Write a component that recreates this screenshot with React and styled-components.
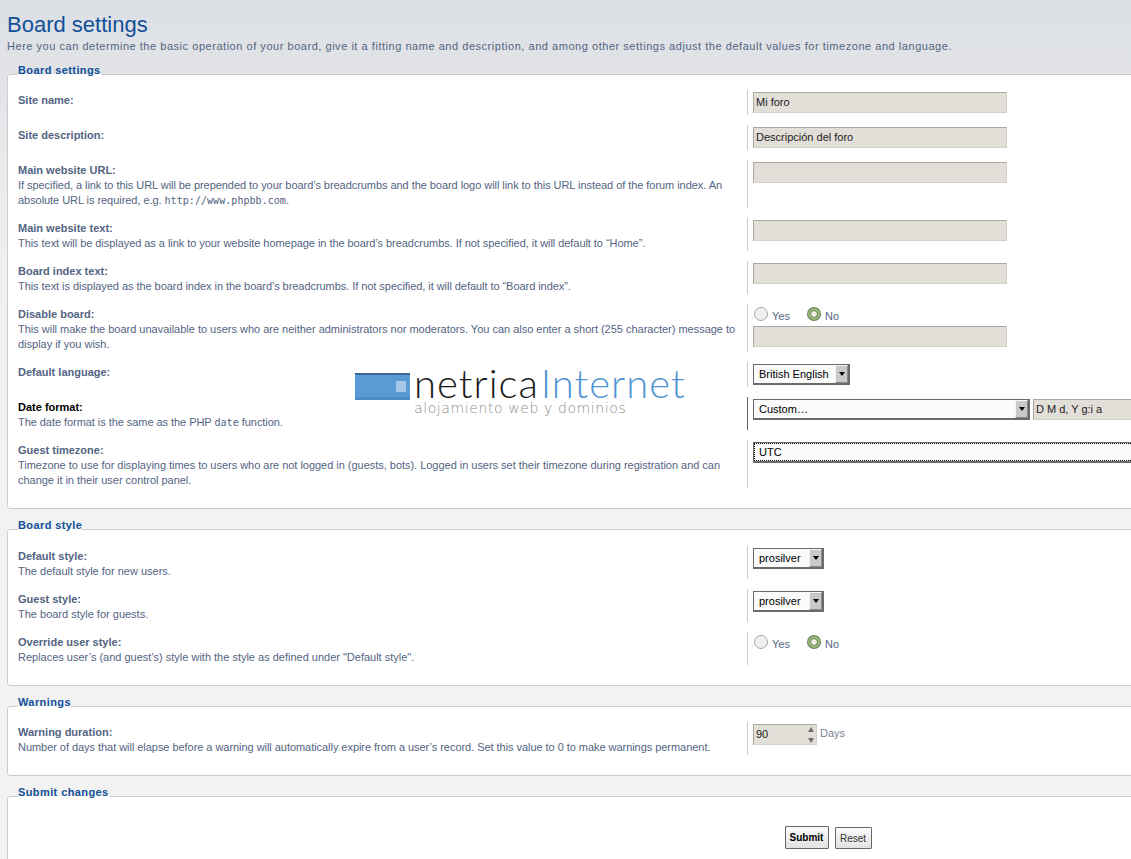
import React from 'react';
import styled, { createGlobalStyle } from 'styled-components';

const GlobalStyle = createGlobalStyle`
  html, body {
    margin: 0;
    padding: 0;
    height: 859px;
    overflow: hidden;
    background: #f3f3f3;
  }
  body {
    font-family: "Liberation Sans", Arial, sans-serif;
    font-size: 11px;
    color: #536482;
  }
`;

const Page = styled.div`
  position: relative;
  width: 1131px;
  height: 859px;
  overflow: hidden;
  padding: 12px 0 0 7px;
  box-sizing: border-box;
  background: linear-gradient(#dcdfe4 0, #e1e3e7 75px, #eeeeee 220px, #f2f2f2 480px);
`;

const Title = styled.h1`
  margin: 0;
  font-size: 22px;
  line-height: 26px;
  font-weight: normal;
  color: #115098;
`;

const Intro = styled.p`
  margin: 1px 0 0;
  font-size: 11px;
  line-height: 14px;
  letter-spacing: 0.536px;
  white-space: nowrap;
  color: #536482;
`;

const Panel = styled.fieldset`
  width: 1642px;
  margin: ${p => p.$top}px 0 0;
  padding: ${p => p.$pad}px 0 ${p => p.$bottom}px 10px;
  box-sizing: border-box;
  background: #fff;
  border: 1px solid #ccc;
  border-radius: 3px;
  min-width: 0;
`;

const Legend = styled.legend`
  margin: 0;
  padding: 0 0 8px;
  font-size: 11px;
  line-height: 12px;
  font-weight: bold;
  letter-spacing: 0.4px;
  color: #115098;
`;

const Rows = styled.div`
  display: flex;
  flex-direction: column;
  gap: 10px;
`;

const Row = styled.div`
  display: flex;
  min-height: 25px;
`;

const Info = styled.div`
  width: 720px;
  margin-right: 9px;
  padding-top: 3px;
  line-height: 15px;
  letter-spacing: ${p => p.$track ?? -0.053}px;
`;

const Label = styled.div`
  font-weight: bold;
  letter-spacing: 0;
  color: ${p => (p.$active ? '#000' : '#536482')};
`;

const Code = styled.code`
  font-family: "DejaVu Sans Mono", monospace;
  font-size: 10px;
  letter-spacing: 0.05px;
`;

const Field = styled.div`
  flex: 1;
  border-left: 1px solid ${p => (p.$active ? '#666' : '#ccc')};
  padding: 2px 0 0 5px;
`;

const TextInput = styled.input`
  display: block;
  width: ${p => p.$width || 254}px;
  height: 21px;
  padding: 0 2px 2px;
  box-sizing: border-box;
  font: 11px "Liberation Sans", Arial, sans-serif;
  color: #222;
  background: #e2ded8;
  border: 1px solid #d4d0c8;
  border-top-color: #aaa79f;
  border-left-color: #aaa79f;
  outline: none;
`;

const Inline = styled.div`
  display: flex;
  align-items: center;
  gap: ${p => p.$gap}px;
`;

const Select = styled.div`
  display: flex;
  align-items: center;
  justify-content: space-between;
  width: ${p => p.$width}px;
  height: 21px;
  box-sizing: border-box;
  border: 1px solid #6b6b6b;
  border-width: 1px 2px 2px 1px;
  background: #fafafa;
  color: #000;
  padding-left: 5px;
  flex-shrink: 0;
  position: relative;
`;

const FocusText = styled.span`
  position: absolute;
  inset: 0;
  padding: 2px 5px;
  outline: 1px dotted #000;
  outline-offset: -1px;
  line-height: 15px;
`;

const Arrow = styled.span`
  display: flex;
  align-items: center;
  justify-content: center;
  width: 13px;
  height: 18px;
  box-sizing: border-box;
  background: #c9c9c9;
  border-top: 1px solid #f4f4f4;
  border-left: 1px solid #f4f4f4;
  border-right: 1px solid #8a8a8a;
  border-bottom: 1px solid #8a8a8a;
  &::after {
    content: "";
    border: 3px solid transparent;
    border-top: 4px solid #000;
    border-bottom: 0;
  }
`;

const Choices = styled.div`
  display: flex;
  align-items: center;
  gap: 17px;
  height: 20px;
  margin-left: 1px;
`;

const Choice = styled.span`
  display: flex;
  align-items: center;
  gap: 4px;
`;

const Radio = styled.span`
  width: 14px;
  height: 14px;
  box-sizing: border-box;
  border-radius: 50%;
  margin-top: -4px;
  ${p => (p.$on
    ? 'background: radial-gradient(circle, #eef0ea 0 2.4px, #6c7f5c 3.2px, #9ab87a 4px, #9ab87a 5.4px, #6c7f5c 6.4px);'
    : 'border: 1px solid #a8a8a8; background: #efefef;')}
`;

const Spin = styled.div`
  position: relative;
  width: 64px;
`;

const SpinArrows = styled.span`
  position: absolute;
  top: 3px;
  right: 3px;
  display: flex;
  flex-direction: column;
  gap: 6px;
  &::before, &::after {
    content: "";
    border: 3px solid transparent;
  }
  &::before { border-bottom: 5px solid #6f6f6f; border-top: 0; }
  &::after { border-top: 5px solid #6f6f6f; border-bottom: 0; }
`;

const Unit = styled.span`
  margin: -3px 0 0 1px;
  line-height: 15px;
  color: #7a8296;
`;

const Actions = styled.div`
  display: flex;
  justify-content: center;
  align-items: flex-end;
  gap: 6px;
  margin: 14px 0 0 -10px;
`;

const Button = styled.button`
  height: ${p => (p.$primary ? 23 : 22)}px;
  width: ${p => (p.$primary ? 44 : 37)}px;
  padding: 0;
  box-sizing: border-box;
  font: ${p => (p.$primary ? 'bold' : 'normal')} 10px "Liberation Sans", Arial, sans-serif;
  color: ${p => (p.$primary ? '#000' : '#333')};
  background: linear-gradient(#fbfbfb, #e2e2e2);
  border: 1px solid #666;
  border-radius: 1px;
`;

const Logo = styled.div`
  position: absolute;
  left: 355px;
  top: 364px;
  display: flex;
  gap: 4px;
  pointer-events: none;
`;

const LogoWords = styled.div`
  display: flex;
  flex-direction: column;
`;

const LogoName = styled.div`
  font-family: Lato, sans-serif;
  font-weight: 300;
  font-size: 40px;
  line-height: 38px;
  letter-spacing: 1px;
  white-space: nowrap;
  color: #1a1a1a;
`;

const LogoAccent = styled.span`
  color: #4f95d3;
  margin-left: 2px;
`;

const LogoTag = styled.div`
  font-family: "DejaVu Sans", sans-serif;
  font-weight: 200;
  font-size: 14px;
  line-height: 12px;
  letter-spacing: 0.6px;
  white-space: nowrap;
  color: #8c8c8c;
`;

function LogoMark() {
  return (
    <svg width="55" height="27" viewBox="0 0 55 27" style={{ marginTop: 9 }}>
      <rect width="55" height="27" fill="#5a9bd5" />
      <rect width="55" height="2" fill="#3d6a94" />
      <rect y="24" width="55" height="3" fill="#4a8cc8" />
      <rect x="41" y="8" width="10" height="11" fill="#a6c8e6" />
    </svg>
  );
}

function YesNo() {
  return (
    <Choices>
      <Choice><Radio />Yes</Choice>
      <Choice><Radio $on />No</Choice>
    </Choices>
  );
}

export default function App() {
  return (
    <Page>
      <GlobalStyle />
      <Title>Board settings</Title>
      <Intro>Here you can determine the basic operation of your board, give it a fitting name and description, and among other settings adjust the default values for timezone and language.</Intro>

      <Panel $top={11} $pad={6} $bottom={20}>
        <Legend>Board settings</Legend>
        <Rows>
          <Row>
            <Info><Label>Site name:</Label></Info>
            <Field><TextInput defaultValue="Mi foro" /></Field>
          </Row>
          <Row>
            <Info><Label>Site description:</Label></Info>
            <Field><TextInput defaultValue="Descripción del foro" /></Field>
          </Row>
          <Row>
            <Info>
              <Label>Main website URL:</Label>
              If specified, a link to this URL will be prepended to your board’s breadcrumbs and the board logo will link to this URL instead of the forum index. An absolute URL is required, e.g. <Code>http://www.phpbb.com</Code>.
            </Info>
            <Field><TextInput /></Field>
          </Row>
          <Row>
            <Info>
              <Label>Main website text:</Label>
              This text will be displayed as a link to your website homepage in the board’s breadcrumbs. If not specified, it will default to “Home”.
            </Info>
            <Field><TextInput /></Field>
          </Row>
          <Row>
            <Info>
              <Label>Board index text:</Label>
              This text is displayed as the board index in the board’s breadcrumbs. If not specified, it will default to “Board index”.
            </Info>
            <Field><TextInput /></Field>
          </Row>
          <Row>
            <Info $track={-0.013}>
              <Label>Disable board:</Label>
              This will make the board unavailable to users who are neither administrators nor moderators. You can also enter a short (255 character) message to display if you wish.
            </Info>
            <Field>
              <YesNo />
              <TextInput />
            </Field>
          </Row>
          <Row>
            <Info><Label>Default language:</Label></Info>
            <Field><Select $width={97}>British English<Arrow /></Select></Field>
          </Row>
          <Row>
            <Info>
              <Label $active>Date format:</Label>
              The date format is the same as the PHP <Code>date</Code> function.
            </Info>
            <Field $active>
              <Inline $gap={3}>
                <Select $width={277}>Custom…<Arrow /></Select>
                <TextInput $width={110} defaultValue="D M d, Y g:i a" />
              </Inline>
            </Field>
          </Row>
          <Row>
            <Info $track={-0.026}>
              <Label>Guest timezone:</Label>
              Timezone to use for displaying times to users who are not logged in (guests, bots). Logged in users set their timezone during registration and can change it in their user control panel.
            </Info>
            <Field><Select $width={400}><FocusText>UTC</FocusText></Select></Field>
          </Row>
        </Rows>
      </Panel>

      <Panel $top={10} $pad={7} $bottom={20}>
        <Legend>Board style</Legend>
        <Rows>
          <Row>
            <Info $track={0}>
              <Label>Default style:</Label>
              The default style for new users.
            </Info>
            <Field><Select $width={71}>prosilver<Arrow /></Select></Field>
          </Row>
          <Row>
            <Info $track={0}>
              <Label>Guest style:</Label>
              The board style for guests.
            </Info>
            <Field><Select $width={71}>prosilver<Arrow /></Select></Field>
          </Row>
          <Row>
            <Info $track={-0.005}>
              <Label>Override user style:</Label>
              Replaces user’s (and guest’s) style with the style as defined under "Default style".
            </Info>
            <Field><YesNo /></Field>
          </Row>
        </Rows>
      </Panel>

      <Panel $top={10} $pad={6} $bottom={20}>
        <Legend>Warnings</Legend>
        <Rows>
          <Row>
            <Info $track={-0.046}>
              <Label>Warning duration:</Label>
              Number of days that will elapse before a warning will automatically expire from a user’s record. Set this value to 0 to make warnings permanent.
            </Info>
            <Field>
              <Inline $gap={2}>
                <Spin>
                  <TextInput $width={64} defaultValue="90" />
                  <SpinArrows />
                </Spin>
                <Unit>Days</Unit>
              </Inline>
            </Field>
          </Row>
        </Rows>
      </Panel>

      <Panel $top={10} $pad={6} $bottom={40}>
        <Legend>Submit changes</Legend>
        <Actions>
          <Button $primary>Submit</Button>
          <Button>Reset</Button>
        </Actions>
      </Panel>

      <Logo>
        <LogoMark />
        <LogoWords>
          <LogoName>netrica<LogoAccent>Internet</LogoAccent></LogoName>
          <LogoTag>alojamiento web y dominios</LogoTag>
        </LogoWords>
      </Logo>
    </Page>
  );
}
